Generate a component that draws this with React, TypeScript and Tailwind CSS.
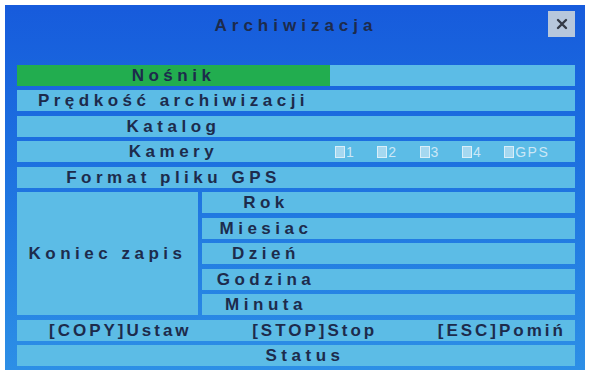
import React from "react";

const font = { fontFamily: '"Liberation Sans", Arial, sans-serif' };

const rowBase =
  "h-[21px] flex items-center text-[17px] font-bold leading-none tracking-[4.5px] text-[#1d2b4c] bg-[#5cbce6]";

function Label({ children, className = "" }: { children: React.ReactNode; className?: string }) {
  return (
    <div className={`w-[313px] shrink-0 flex items-center justify-center h-full ${className}`}>
      {children}
    </div>
  );
}

function Check({ label }: { label: string }) {
  return (
    <span className="flex items-center text-[14px] font-normal tracking-[1.5px] text-[#cbe7f6]">
      <span className="inline-block w-[10px] h-[12px] border border-[#d9eef9] bg-[#a5d8f0] mr-[1px]" />
      {label}
    </span>
  );
}

const subRows = ["Rok", "Miesiac", "Dzień", "Godzina", "Minuta"];

export default function App() {
  return (
    <div className="w-[590px] h-[373px] bg-white p-[5px] pb-[3px]" style={font}>
      <div className="h-full bg-gradient-to-b from-[#175bdc] via-[#1f74e0] to-[#2d8fe6] pl-[12px] pr-[10px] pt-[6px] pb-[4px] flex flex-col">
        <div className="relative h-[54px] flex items-start justify-center">
          <div className="mt-[2px] text-[17px] font-bold tracking-[5px] text-[#1d2b4c]">Archiwizacja</div>
          <div className="absolute right-[0px] top-[0px] w-[27px] h-[26px] bg-[#b7c7dc] flex items-center justify-center">
            <svg width="12" height="12" viewBox="0 0 12 12">
              <path d="M2 2 L10 10 M10 2 L2 10" stroke="#343a46" strokeWidth="2.4" strokeLinecap="round" />
            </svg>
          </div>
        </div>

        <div className="flex flex-col gap-[4.5px]">
          <div className={rowBase}>
            <Label className="bg-[#22ad4f]">Nośnik</Label>
          </div>
          <div className={rowBase}>
            <Label>Prędkość archiwizacji</Label>
          </div>
          <div className={rowBase}>
            <Label>Katalog</Label>
          </div>
          <div className={rowBase}>
            <Label>Kamery</Label>
            <div className="flex items-center gap-[22px] ml-[5px]">
              <Check label="1" />
              <Check label="2" />
              <Check label="3" />
              <Check label="4" />
              <Check label="GPS" />
            </div>
          </div>
          <div className={rowBase}>
            <Label>Format pliku GPS</Label>
          </div>

          <div className="flex gap-[4px]">
            <div className="w-[181px] shrink-0 bg-[#5cbce6] flex items-center justify-center text-[17px] font-bold tracking-[4.5px] text-[#1d2b4c]">
              Koniec zapis
            </div>
            <div className="flex-1 flex flex-col gap-[4.5px]">
              {subRows.map((r) => (
                <div key={r} className={rowBase}>
                  <div className="w-[128px] shrink-0 flex items-center justify-center h-full">{r}</div>
                </div>
              ))}
            </div>
          </div>

          <div className={`${rowBase} justify-between pl-[32px] pr-[9px]`}>
            <span className="tracking-[3px]">[COPY]Ustaw</span>
            <span className="tracking-[3px]">[STOP]Stop</span>
            <span className="tracking-[3px]">[ESC]Pomiń</span>
          </div>
          <div className={`${rowBase} justify-center`}>
            <span className="ml-[18px]">Status</span>
          </div>
        </div>
      </div>
    </div>
  );
}
